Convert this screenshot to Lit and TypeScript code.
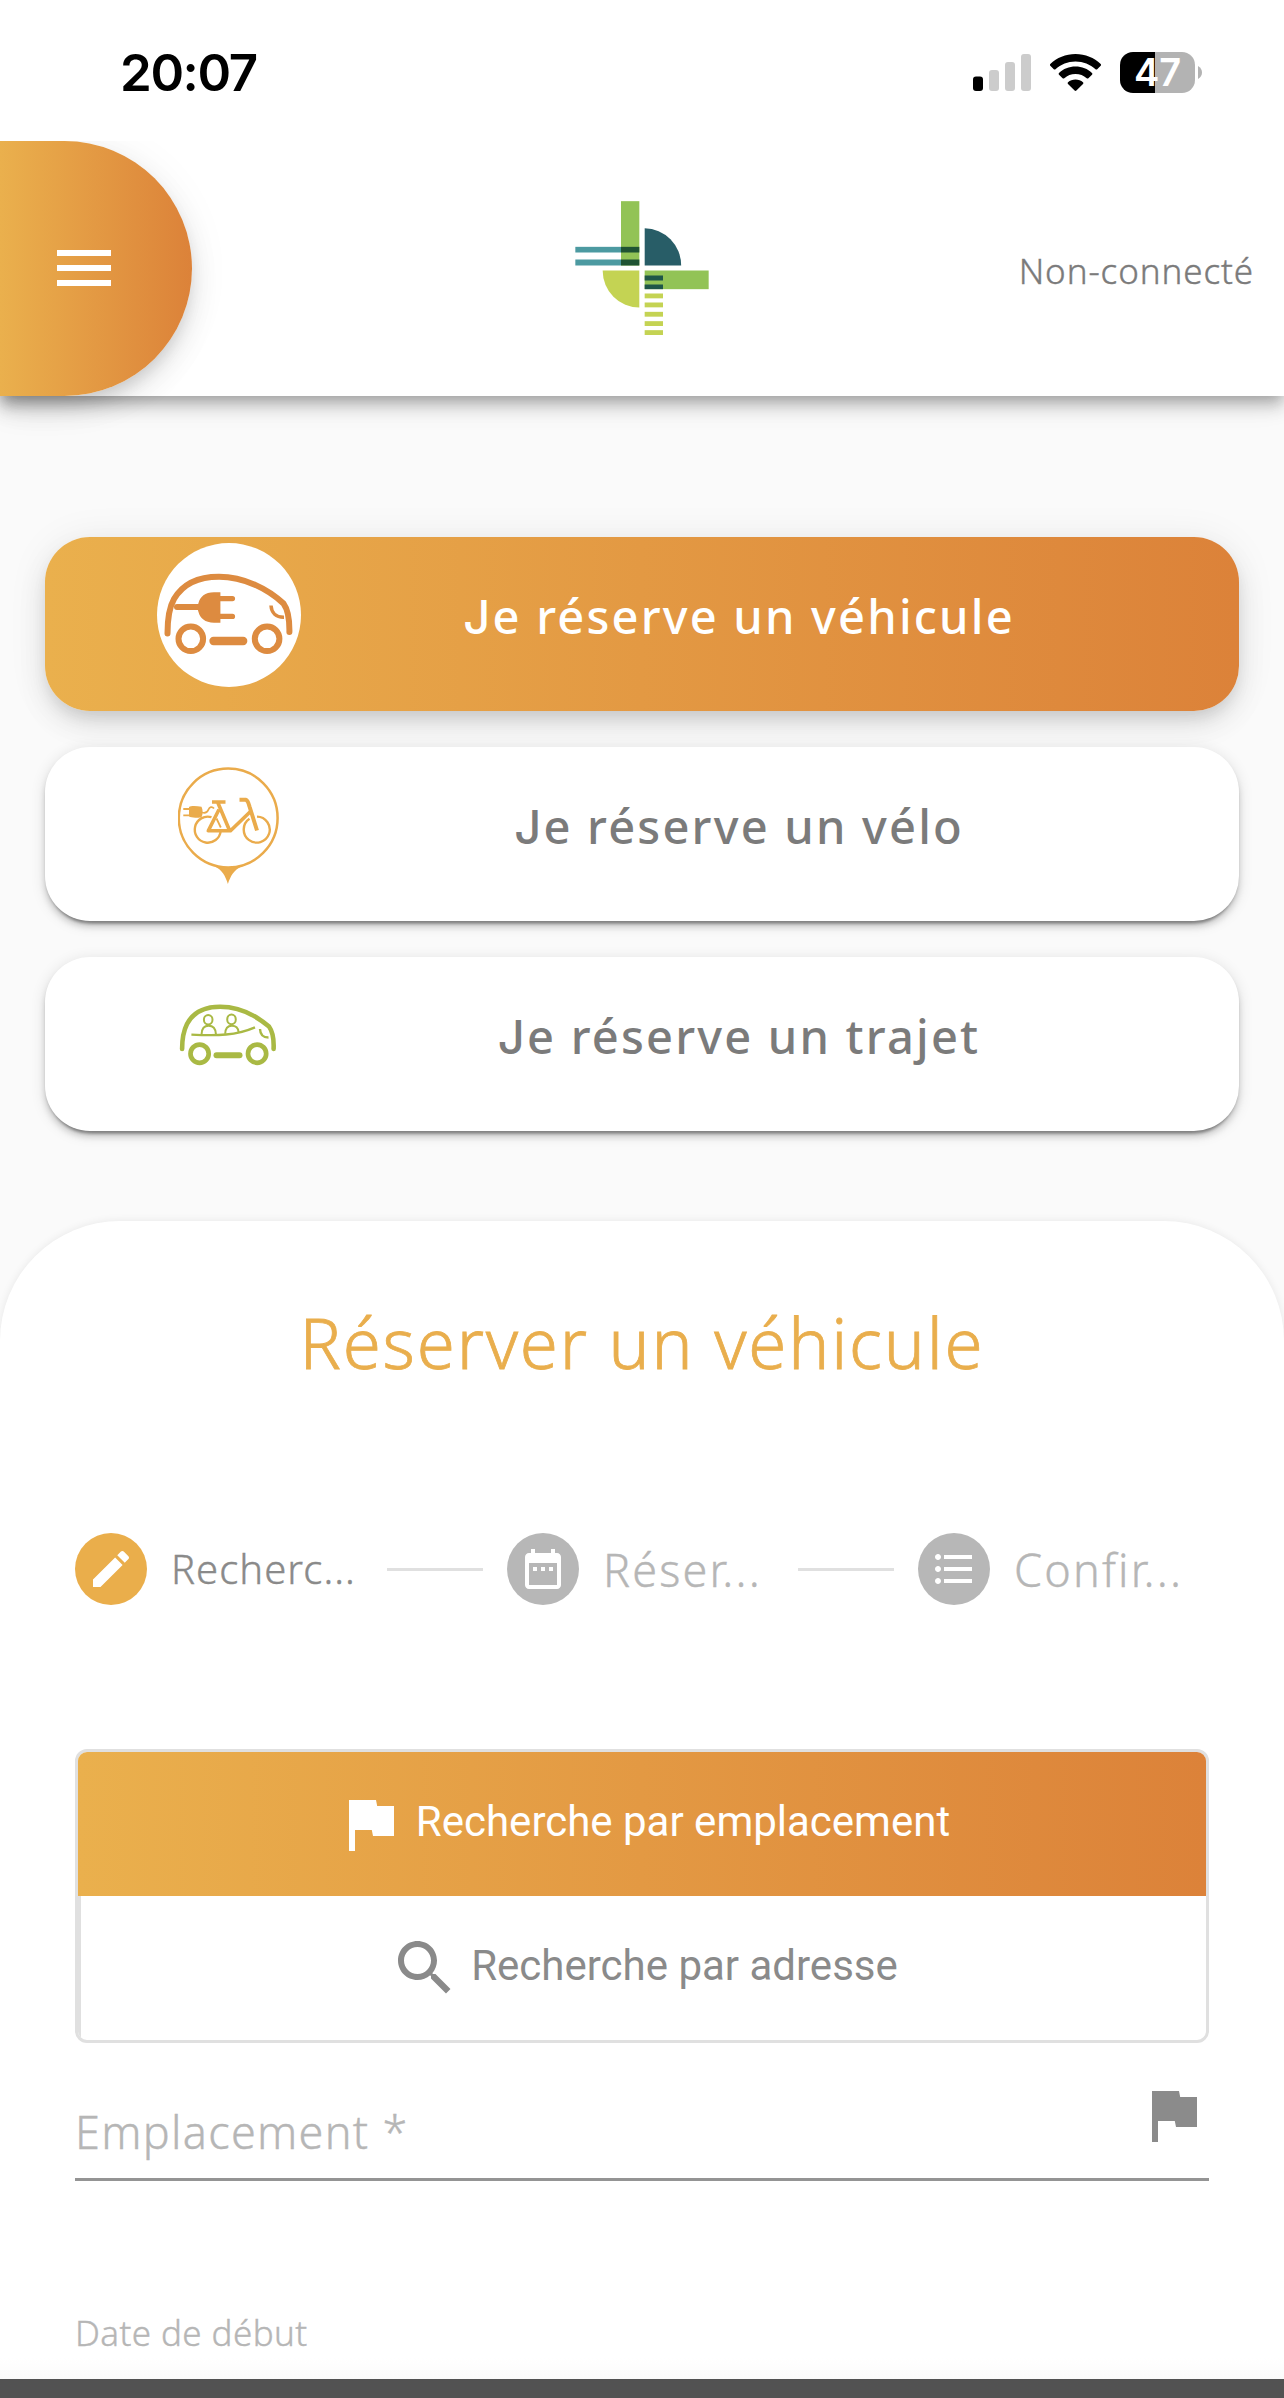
import { LitElement, html, css, svg, nothing } from "lit";
import { customElement, property } from "lit/decorators.js";
import { classMap } from "lit/directives/class-map.js";

const PATHS: Record<string, string> = {
  menu: "M3 18h18v-2H3v2zm0-5h18v-2H3v2zm0-7v2h18V6H3z",
  edit: "M3 17.25V21h3.75L17.81 9.94l-3.75-3.75L3 17.25zM20.71 7.04c.39-.39.39-1.02 0-1.41l-2.34-2.34c-.39-.39-1.02-.39-1.41 0l-1.83 1.83 3.75 3.75 1.83-1.83z",
  date: "M9 11H7v2h2v-2zm4 0h-2v2h2v-2zm4 0h-2v2h2v-2zm2-7h-1V2h-2v2H8V2H6v2H5c-1.11 0-1.99.9-1.99 2L3 20c0 1.1.89 2 2 2h14c1.1 0 2-.9 2-2V6c0-1.1-.9-2-2-2zm0 16H5V9h14v11z",
  list: "M4 10.5c-.83 0-1.5.67-1.5 1.5s.67 1.5 1.5 1.5 1.5-.67 1.5-1.5-.67-1.5-1.5-1.5zm0-6c-.83 0-1.5.67-1.5 1.5S3.17 7.5 4 7.5 5.5 6.83 5.5 6 4.83 4.5 4 4.5zm0 12c-.83 0-1.5.68-1.5 1.5s.68 1.5 1.5 1.5 1.5-.68 1.5-1.5-.67-1.5-1.5-1.5zM7 19h14v-2H7v2zm0-6h14v-2H7v2zm0-8v2h14V5H7z",
  flag: "M14.4 6L14 4H5v17h2v-7h5.6l.4 2h7V6z",
  search: "M15.5 14h-.79l-.28-.27C15.41 12.59 16 11.11 16 9.5 16 5.91 13.09 3 9.5 3S3 5.91 3 9.5 5.91 16 9.5 16c1.61 0 3.09-.59 4.23-1.57l.27.28v.79l5 4.99L20.49 19l-4.99-5zm-6 0C7.01 14 5 11.99 5 9.5S7.01 5 9.5 5 14 7.01 14 9.5 11.99 14 9.5 14z",
};

@customElement("mat-glyph")
class MatGlyph extends LitElement {
  @property() name = "";
  static styles = css`
    :host { display: block; flex: none; }
    svg { display: block; width: 100%; height: 100%; fill: currentColor; }
  `;
  render() {
    return html`<svg viewBox="0 0 24 24"><path d=${PATHS[this.name]}></path></svg>`;
  }
}

@customElement("status-bar")
class StatusBar extends LitElement {
  static styles = css`
    :host {
      display: flex; justify-content: space-between; align-items: flex-start;
      height: 141px; box-sizing: border-box; padding: 0 82px 0 120px; color: #000;
      font-family: Inter, "Liberation Sans", sans-serif;
    }
    .time { font-size: 51px; font-weight: 600; letter-spacing: -1.4px; line-height: 146px; }
    .icons { display: flex; align-items: flex-start; padding-top: 52px; }
    svg { display: block; }
    .wifi { margin: 2px 19px 0; }
    .battery {
      width: 75px; height: 41px; border-radius: 13px; color: #fff; text-align: center;
      background: linear-gradient(90deg, #000 35px, #b3b3b3 35px);
      font-size: 38px; font-weight: 600; line-height: 41px;
    }
    .nub { margin: 14px 0 0 3px; }
  `;
  render() {
    return html`
      <div class="time">20:07</div>
      <div class="icons">
        <svg width="58" height="41" viewBox="0 0 58 41">
          <rect y="24.5" width="10" height="14.5" rx="3"></rect>
          <g fill="#ccc">
            <rect x="16" y="18" width="10" height="21" rx="3"></rect>
            <rect x="32" y="10" width="10" height="29" rx="3"></rect>
            <rect x="48" y="2" width="10" height="37" rx="3"></rect>
          </g>
        </svg>
        <svg class="wifi" width="51" height="38" viewBox="0 0 51 38">
          <path d="M25.5 0C35.3 0 44.200 3.800 50.700 10C51.200 10.500 51.200 11.200 50.700 11.700L47.200 15.200C46.700 15.700 46 15.700 45.500 15.200C40.200 10.300 33.200 7.400 25.500 7.400S10.800 10.300 5.500 15.200C5 15.700 4.300 15.700 3.800 15.200L.3 11.700C-.2 11.200-.2 10.500.3 10C6.800 3.800 15.700 0 25.500 0Z"></path>
          <path d="M25.500 12.600C31.900 12.600 37.700 15 42 19C42.500 19.500 42.500 20.200 42 20.700L38.400 24.200C37.900 24.700 37.200 24.700 36.700 24.200C33.700 21.600 29.800 20 25.500 20S17.300 21.600 14.300 24.200C13.800 24.700 13.100 24.700 12.600 24.200L9 20.700C8.500 20.200 8.500 19.500 9 19C13.300 15 19.100 12.600 25.500 12.600Z"></path>
          <path d="M25.500 25.500C28.400 25.500 31 26.500 33 28.200C33.500 28.700 33.500 29.400 33 29.900L26.400 36.600C25.800 37.200 25.200 37.200 24.600 36.600L18 29.900C17.500 29.400 17.500 28.700 18 28.200C20 26.500 22.600 25.500 25.500 25.500Z"></path>
        </svg>
        <div class="battery">47</div>
        <svg class="nub" width="4" height="13" viewBox="0 0 4 13">
          <path d="M0 0C2.500 1.200 4 3.800 4 6.500S2.500 11.800 0 13Z" fill="#b3b3b3"></path>
        </svg>
      </div>
    `;
  }
}

@customElement("top-bar")
class TopBar extends LitElement {
  static styles = css`
    :host {
      display: grid; grid-template-columns: 1fr 170px 1fr; align-items: center;
      height: 255px; background: #fff; color: #7b7b7b;
      font-family: "Noto Sans", "Liberation Sans", sans-serif;
    }
    .menu {
      width: 192px; height: 255px; box-sizing: border-box; border: 0; padding: 0 0 1px 48px;
      display: flex; align-items: center; color: #fff;
      border-radius: 0 127.5px 127.5px 0;
      background: linear-gradient(90deg, #eab04d, #dc8239);
      box-shadow: 0 9px 15px -3px rgba(0,0,0,.12), 0 15px 30px 0 rgba(0,0,0,.09), 0 3px 42px 3px rgba(0,0,0,.05);
      clip-path: inset(0 -80px -70px 0);
    }
    .menu mat-glyph { width: 72px; height: 72px; }
    .logo { display: block; }
    .user {
      justify-self: end; padding: 5px 30px 0 0; font-size: 35px; font-weight: 300;
      letter-spacing: .9px; line-height: 46px; -webkit-text-stroke: .4px currentColor;
    }
  `;
  render() {
    const steps = [339, 366, 394, 422, 449];
    return html`
      <button class="menu" aria-label="Menu"><mat-glyph name="menu"></mat-glyph></button>
      <svg class="logo" width="170" height="170" viewBox="-9 10.500 510 510">
        <rect x="183" y="62" width="55" height="193" fill="#92c356"></rect>
        <g fill="#4c9aa1">
          <rect x="46" y="199" width="137" height="17"></rect>
          <rect x="46" y="237" width="137" height="18"></rect>
        </g>
        <g fill="#1f5333">
          <rect x="183" y="199" width="55" height="17"></rect>
          <rect x="183" y="237" width="55" height="18"></rect>
        </g>
        <path d="M254 255V143.500A109.500 111.500 0 0 1 363.500 255Z" fill="#285d67"></path>
        <path d="M238 270V381A110 111 0 0 1 128 270Z" fill="#c4d353"></path>
        <rect x="254" y="270" width="192" height="56" fill="#92c356"></rect>
        <g fill="#1f5648">
          <rect x="254" y="285" width="55" height="15"></rect>
          <rect x="254" y="312" width="55" height="14"></rect>
        </g>
        <g fill="#c4d353">
          ${steps.map((y) => svg`<rect x="254" y=${y} width="55" height="14.500"></rect>`)}
        </g>
      </svg>
      <div class="user">Non-connecté</div>
    `;
  }
}

const carIcon = html`
  <svg width="144" height="144" viewBox="0 0 144 144" fill="none" stroke="#dd8b40" stroke-linecap="round">
    <circle cx="72" cy="72" r="72" fill="#fff" stroke="none"></circle>
    <path stroke-width="6" d="M10.500 90.500C10.500 74 13 63 17 56C26 40.500 41 33.700 62 33.700C87 33.700 111 46 126.500 60.500C130.500 66 132.600 76 132.400 89"></path>
    <circle cx="33.800" cy="95.800" r="12.300" stroke-width="6"></circle>
    <circle cx="110.100" cy="95.800" r="12.300" stroke-width="6"></circle>
    <path stroke-width="8.300" d="M56.500 98H86.200"></path>
    <path stroke-width="6" d="M20 64H42"></path>
    <path fill="#dd8b40" stroke="none" d="M63.400 49.300H57C48 49.300 43 54 41.500 60C40.500 62 40.500 67 41.500 69C43 75 48 79.700 57 79.700H63.400Z"></path>
    <path stroke-width="5.400" d="M62 55.600H75.400M62 73.400H75.400"></path>
    <path stroke-width="3.500" stroke-linecap="butt" d="M114 62.500C114.500 70 119 74.500 127 74.300"></path>
  </svg>
`;

const bikeIcon = html`
  <svg width="102" height="118" viewBox="1 -1 102 118" fill="none" stroke="#eaab4b">
    <circle cx="51.200" cy="51" r="49.400" stroke-width="2.500"></circle>
    <path fill="#eaab4b" stroke="none" d="M38 99.500C46 101 56 101 64.500 99.500C57 103 53.500 109 50.900 117C48.500 109 45 103 38 99.500Z"></path>
    <path stroke-width="2.400" d="M34.500 50.200A13 13 0 1 0 43.700 64"></path>
    <path stroke-width="2.400" d="M72.500 51.800A13 13 0 1 0 80 49.600"></path>
    <path stroke-width="3.600" stroke-linejoin="round" d="M35 35H48.500M41 36L52.800 64M42 42.500L31.300 63.700H53.500L74.500 43.500"></path>
    <path stroke-width="4" stroke-linejoin="round" d="M62.500 32.700H68.500C71 33.500 71.500 36 72.500 39.500L80 63.500"></path>
    <path stroke-width="1.800" d="M39.500 51.500L43.800 60.500"></path>
    <path fill="#eaab4b" stroke="none" d="M12 40C14 38.600 20 39 24.500 39.800C26 42.500 26 47.500 24.500 50.200C20 51 14 51 12 49.600Z"></path>
    <path stroke-width="1.800" d="M6.300 42H12M6.300 48.300H12M25 45.500C28 46.500 30.500 45 31.500 42.500S35 39 37 41.500"></path>
  </svg>
`;

const rideIcon = html`
  <svg width="100" height="66" viewBox="1 0 100 66" fill="none" stroke="#a9b944" stroke-linecap="round">
    <path stroke-width="4.600" d="M4.100 47C4.100 36 5 30 9 22C15 10.500 26 4.800 42 4.800C61 4.800 78 13.500 91 24.500C95 30 96 38 95.600 47"></path>
    <circle cx="21.600" cy="51.700" r="9.100" stroke-width="4.700"></circle>
    <circle cx="79.100" cy="51.700" r="9.100" stroke-width="4.700"></circle>
    <path stroke-width="6" d="M38.500 53.200H61.500"></path>
    <g stroke-width="2" stroke-linecap="butt">
      <ellipse cx="30.200" cy="17.700" rx="4.300" ry="4.800"></ellipse>
      <ellipse cx="53.500" cy="17.400" rx="4.300" ry="4.800"></ellipse>
      <path d="M23.600 32C23.800 26.500 26 23.800 30.600 23.800S37.600 26.500 37.900 32"></path>
      <path d="M47.200 31.800C47.300 26.500 49.500 23.700 53.800 23.700S60.200 26 60.600 30"></path>
      <path stroke-width="2.400" d="M13.400 32.600C40 34 58 33.500 77 25.300"></path>
      <path stroke-width="2.400" d="M82 27C82.200 32.500 85 35.500 90.500 35.500"></path>
    </g>
  </svg>
`;

@customElement("choice-card")
class ChoiceCard extends LitElement {
  @property() label = "";
  @property({ type: Boolean }) active = false;
  @property({ attribute: false }) icon: unknown = nothing;
  static styles = css`
    :host { display: block; }
    .card {
      display: grid; grid-template-columns: 367px 652px 1fr; grid-template-rows: 156px;
      align-items: center; justify-items: center; height: 174px; border-radius: 45px;
      background: #fff; color: #7b7b7b;
      box-shadow: 0 9px 3px -6px rgba(0,0,0,.2), 0 6px 6px 0 rgba(0,0,0,.14), 0 3px 15px 0 rgba(0,0,0,.12), 0 3px 3px -1px rgba(0,0,0,.2);
    }
    .card.active {
      color: #fff; background: linear-gradient(90deg, #eab04d, #dc8239);
      box-shadow: 0 9px 15px -3px rgba(0,0,0,.1), 0 15px 30px 0 rgba(0,0,0,.08), 0 3px 42px 0 rgba(0,0,0,.07);
    }
    svg { display: block; }
    .label {
      font: 500 47px/156px "Noto Sans", "Liberation Sans", sans-serif; padding-top: 2px;
      letter-spacing: 2.2px; margin-right: -2.2px; white-space: nowrap;
    }
    .label::first-letter { font-family: Inter, "Liberation Sans", sans-serif; }
  `;
  render() {
    return html`<div class=${classMap({ card: true, active: this.active })}>
      ${this.icon}
      <div class="label">${this.label}</div>
    </div>`;
  }
}

@customElement("booking-panel")
class BookingPanel extends LitElement {
  static styles = css`
    :host {
      display: block; background: #fff; border-radius: 120px 120px 0 0; padding-top: 81px;
      box-shadow: 0 0 9px rgba(0,0,0,.08);
      font-family: "Noto Sans", "Liberation Sans", sans-serif; font-weight: 300;
      -webkit-text-stroke: .4px currentColor;
    }
    h1 {
      margin: 0; text-align: center; color: #e9ae4d; font-size: 69px; font-weight: 300;
      line-height: 80px; letter-spacing: 1.82px; -webkit-text-stroke-width: .8px;
    }
    .stepper { display: flex; align-items: center; height: 72px; margin: 151px 75px 0; }
    .badge {
      display: flex; align-items: center; justify-content: center; flex: none;
      width: 72px; height: 72px; border-radius: 50%; background: #b7b7b7; color: #fff;
    }
    .badge.on { background: #eaae4b; }
    .badge mat-glyph { width: 48px; height: 48px; }
    .step { padding: 2px 0 0 24px; color: #b6b6b6; font-size: 45px; line-height: 60px; letter-spacing: 2.2px; white-space: nowrap; box-sizing: border-box; width: 219px; }
    .step.on { padding: 0 0 1px 24px; color: #8a8a8a; font-size: 40px; letter-spacing: 1.05px; width: 240px; }
    .line { flex: none; width: 96px; height: 3px; background: #e0e0e0; margin-right: 24px; }
    .toggle {
      margin: 144px 75px 0; border: 3px solid #e0e0e0; border-radius: 12px; overflow: hidden;
      font: 400 42px/48px Roboto, "Liberation Sans", sans-serif; -webkit-text-stroke-width: 0;
    }
    .option {
      display: flex; justify-content: center; align-items: center; gap: 10px;
      height: 144px; color: #8a8a8a; border-left: 3px solid #e0e0e0; box-sizing: border-box;
    }
    .option.on { color: #fff; border-left: 0; background: linear-gradient(90deg, #eab04d, #dc8239); }
    .option mat-glyph { width: 72px; height: 72px; }
    .option span { padding-bottom: 5px; }
    .field {
      display: flex; justify-content: space-between; align-items: flex-start;
      margin: 36px 75px 0; height: 99px; border-bottom: 3px solid #949494; color: #b6b6b6;
    }
    .field .hint { font-size: 45px; line-height: 60px; letter-spacing: 1.3px; padding-top: 23px; }
    .field mat-glyph { width: 72px; height: 72px; color: #8b8b8b; }
    .date { margin: 127px 75px 0; font-size: 35px; line-height: 50px; letter-spacing: .4px; color: #b6b6b6; }
    .fade { height: 21px; background: linear-gradient(#fff, #fbfbfb); }
  `;
  render() {
    return html`
      <h1>Réserver un véhicule</h1>
      <div class="stepper">
        <div class="badge on"><mat-glyph name="edit"></mat-glyph></div>
        <div class="step on">Recherc...</div>
        <div class="line"></div>
        <div class="badge"><mat-glyph name="date"></mat-glyph></div>
        <div class="step">Réser...</div>
        <div class="line"></div>
        <div class="badge"><mat-glyph name="list"></mat-glyph></div>
        <div class="step">Confir...</div>
      </div>
      <div class="toggle">
        <div class="option on"><mat-glyph name="flag"></mat-glyph><span>Recherche par emplacement</span></div>
        <div class="option"><mat-glyph name="search"></mat-glyph><span>Recherche par adresse</span></div>
      </div>
      <div class="field"><div class="hint">Emplacement *</div><mat-glyph name="flag"></mat-glyph></div>
      <div class="date">Date de début</div>
      <div class="fade"></div>
    `;
  }
}

@customElement("app-root")
class AppRoot extends LitElement {
  static styles = css`
    :host { display: block; width: 100%; height: 2398px; overflow: hidden; background: #fafafa; }
    .head {
      background: #fff;
      box-shadow: 0 6px 12px -3px rgba(0,0,0,.2), 0 12px 15px 0 rgba(0,0,0,.14), 0 3px 30px 0 rgba(0,0,0,.12);
    }
    .cards { display: flex; flex-direction: column; gap: 36px; padding: 141px 45px 90px; }
    .toolbar { height: 19px; background: #525252; }
  `;
  render() {
    return html`
      <div class="head"><status-bar></status-bar><top-bar></top-bar></div>
      <div class="cards">
        <choice-card active label="Je réserve un véhicule" .icon=${carIcon}></choice-card>
        <choice-card label="Je réserve un vélo" .icon=${bikeIcon}></choice-card>
        <choice-card label="Je réserve un trajet" .icon=${rideIcon}></choice-card>
      </div>
      <booking-panel></booking-panel>
      <div class="toolbar"></div>
    `;
  }
}
